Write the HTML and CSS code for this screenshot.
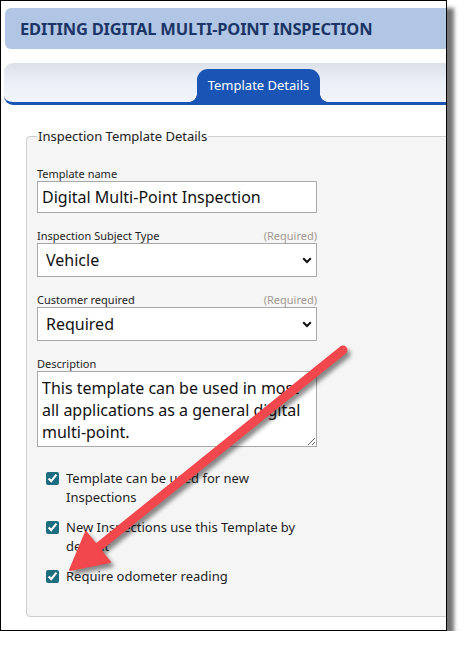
FILE: index.html
```html
<!DOCTYPE html>
<html lang="en">
<head>
<meta charset="utf-8">
<title>Editing Digital Multi-Point Inspection</title>
<link rel="stylesheet" href="styles.css">
</head>
<body>
<div class="window">
  <div class="page">
    <div class="title-bar"><h1 class="title">EDITING DIGITAL MULTI-POINT INSPECTION</h1></div>
    <div class="tabbar">
      <div class="tab">Template Details</div>
    </div>
    <fieldset class="details">
      <legend class="legend">Inspection Template Details</legend>
      <div class="form">
        <div class="group">
          <div class="label-row"><label class="label" for="tname">Template name</label></div>
          <input id="tname" class="input" type="text" value="Digital Multi-Point Inspection">
        </div>
        <div class="group">
          <div class="label-row"><label class="label" for="stype">Inspection Subject Type</label><span class="req">(Required)</span></div>
          <div class="select-wrap">
            <select id="stype" class="select"><option>Vehicle</option></select>
            <svg class="chev" width="10" height="7" viewBox="0 0 10 7"><path d="M1.2 1.2 L5 5 L8.8 1.2" fill="none" stroke="#111" stroke-width="2"/></svg>
          </div>
        </div>
        <div class="group">
          <div class="label-row"><label class="label" for="creq">Customer required</label><span class="req">(Required)</span></div>
          <div class="select-wrap">
            <select id="creq" class="select"><option>Required</option></select>
            <svg class="chev" width="10" height="7" viewBox="0 0 10 7"><path d="M1.2 1.2 L5 5 L8.8 1.2" fill="none" stroke="#111" stroke-width="2"/></svg>
          </div>
        </div>
        <div class="group">
          <div class="label-row"><label class="label" for="desc">Description</label></div>
          <textarea id="desc" class="textarea">This template can be used in most all applications as a general digital multi-point.</textarea>
        </div>
        <div class="checks">
          <label class="check"><input type="checkbox" checked><span>Template can be used for new Inspections</span></label>
          <label class="check"><input type="checkbox" checked><span>New Inspections use this Template by default</span></label>
          <label class="check"><input type="checkbox" checked><span>Require odometer reading</span></label>
        </div>
      </div>
    </fieldset>
  </div>
  <svg class="arrow" width="446" height="630" viewBox="0 0 446 630">
    <g class="arrow-shape">
      <line x1="342" y1="349" x2="95" y2="548" stroke="#f2474c" stroke-width="9" stroke-linecap="round"/>
      <polygon points="69,569 85,531 109,561" fill="#f2474c" stroke="#f2474c" stroke-width="2" stroke-linejoin="round"/>
    </g>
  </svg>
</div>
</body>
</html>
```

FILE: styles.css
```css
html, body {
  margin: 0;
  padding: 0;
  background: #ffffff;
}

body {
  font-family: "Noto Sans", "Open Sans", sans-serif;
  color: #222222;
}

.window {
  position: relative;
  width: 447px;
  height: 631px;
  box-sizing: border-box;
  border: 1px solid #000000;
  background: #ffffff;
  overflow: hidden;
  box-shadow: 7px 8px 4px rgba(0, 0, 0, 0.55);
}

.page {
  width: 520px;
}

.title-bar {
  margin: 7px 0 0 4px;
  height: 41px;
  background: #b0c6e4;
  border-radius: 6px 0 0 6px;
  display: flex;
  align-items: center;
  padding-left: 15px;
}

.title {
  margin: 0;
  font-size: 16.5px;
  font-weight: 700;
  letter-spacing: -0.2px;
  color: #1c3566;
  line-height: 20px;
}

.tabbar {
  margin: 14px 0 0 3px;
  height: 42px;
  box-sizing: border-box;
  border-bottom: 3px solid #1a55b5;
  border-radius: 9px 0 0 9px;
  background: linear-gradient(#dce1e9, #eaeef6 45%, #f2f5fb);
  display: flex;
  align-items: flex-end;
  padding-left: 193px;
}

.tab {
  position: relative;
  width: 123px;
  height: 33px;
  box-sizing: border-box;
  background: #1a55b5;
  color: #ffffff;
  border-radius: 11px 11px 0 0;
  font-size: 13px;
  line-height: 33px;
  text-align: center;
}

.tab::before,
.tab::after {
  content: "";
  position: absolute;
  bottom: 0;
  width: 8px;
  height: 8px;
}

.tab::before {
  left: -8px;
  background: radial-gradient(circle at 0 0, transparent 7.5px, #1a55b5 8px);
}

.tab::after {
  right: -8px;
  background: radial-gradient(circle at 100% 0, transparent 7.5px, #1a55b5 8px);
}

.details {
  margin: 22px 0 0 25px;
  width: 480px;
  box-sizing: border-box;
  padding: 22px 10px 30px 10px;
  border: 1px solid #cfcfcf;
  border-radius: 4px;
  background: #f5f5f5;
  min-width: 0;
}

.legend {
  padding: 0 1px;
  font-size: 13px;
  line-height: 18px;
  color: #222222;
}

.form {
  width: 280px;
}

.group {
  margin-bottom: 16px;
}

.label-row {
  display: flex;
  justify-content: space-between;
  font-size: 11px;
  line-height: 14px;
}

.label {
  color: #1e1e1e;
}

.req {
  color: #a39a93;
}

.input,
.select,
.textarea {
  display: block;
  width: 280px;
  box-sizing: border-box;
  margin: 0;
  border: 1px solid #a9a9a9;
  border-radius: 0;
  background: #ffffff;
  color: #111111;
  font-family: "Noto Sans", "Open Sans", sans-serif;
  font-size: 16px;
  outline: none;
}

.input {
  height: 32px;
  padding: 0 4px;
}

.select-wrap {
  position: relative;
}

.select {
  height: 34px;
  padding: 0 0 0 8px;
  appearance: none;
  -webkit-appearance: none;
}

.chev {
  position: absolute;
  right: 5px;
  top: 14px;
  pointer-events: none;
}

.textarea {
  height: 76px;
  padding: 5px 4px 2px 4px;
  line-height: 22px;
  resize: vertical;
  overflow: hidden;
}

.checks {
  margin-top: 22px;
  display: flex;
  flex-direction: column;
  gap: 11px;
}

.check {
  display: flex;
  gap: 7px;
  padding-left: 9px;
  font-size: 13px;
  line-height: 19px;
  color: #1e1e1e;
}

.check input {
  flex: none;
  width: 13px;
  height: 13px;
  margin: 3px 0 0 0;
  accent-color: #1d6d80;
}

.arrow {
  position: absolute;
  left: 0;
  top: 0;
  pointer-events: none;
}

.arrow-shape {
  filter: drop-shadow(3px 4px 2px rgba(0, 0, 0, 0.45));
}
```
